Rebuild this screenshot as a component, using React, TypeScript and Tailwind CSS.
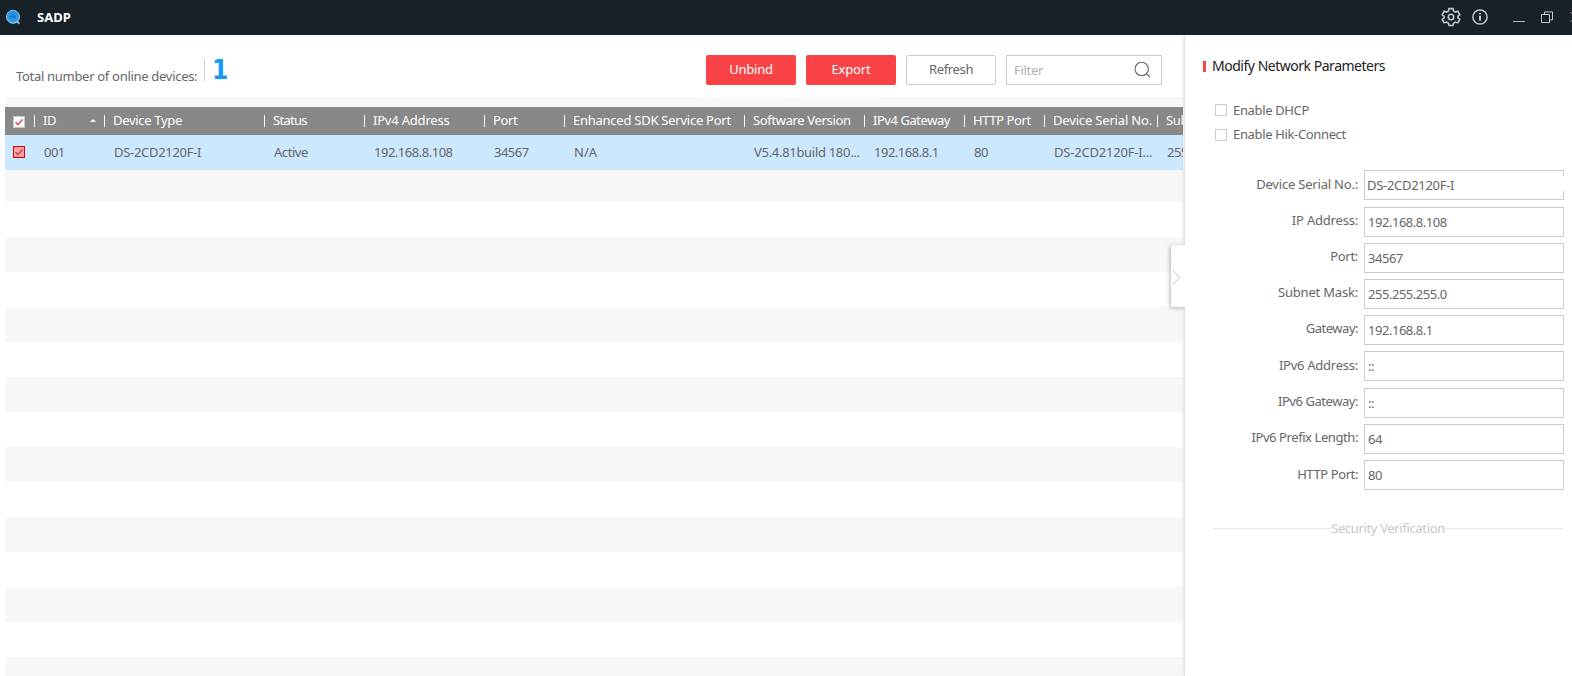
import clsx from "clsx";

type Column = {
  title: string;
  value: string;
  width: string;
  titleClass?: string;
  valueClass?: string;
  sorted?: boolean;
};

const columns: Column[] = [
  { title: "ID", value: "001", width: "w-[70px]", titleClass: "tracking-[-0.5px]", valueClass: "tracking-[-0.5px]", sorted: true },
  { title: "Device Type", value: "DS-2CD2120F-I", width: "w-[160px]", valueClass: "tracking-[-0.3px]" },
  { title: "Status", value: "Active", width: "w-[100px]", titleClass: "tracking-[-0.7px]", valueClass: "tracking-[-0.45px]" },
  { title: "IPv4 Address", value: "192.168.8.108", width: "w-[120px]", titleClass: "tracking-[-0.2px]", valueClass: "tracking-[-0.48px]" },
  { title: "Port", value: "34567", width: "w-[80px]", titleClass: "tracking-[-0.4px]", valueClass: "tracking-[-0.5px]" },
  { title: "Enhanced SDK Service Port", value: "N/A", width: "w-[180px]", titleClass: "tracking-[-0.25px]", valueClass: "tracking-normal" },
  { title: "Software Version", value: "V5.4.81build 180...", width: "w-[120px]", titleClass: "tracking-[-0.35px]" },
  { title: "IPv4 Gateway", value: "192.168.8.1", width: "w-[100px]", titleClass: "tracking-[-0.45px]", valueClass: "tracking-[-0.48px]" },
  { title: "HTTP Port", value: "80", width: "w-[80px]", titleClass: "tracking-[-0.4px]", valueClass: "tracking-[-0.5px]" },
  { title: "Device Serial No.", value: "DS-2CD2120F-I...", width: "w-[113px]", titleClass: "tracking-[-0.17px]", valueClass: "tracking-[-0.2px]" },
  { title: "Subnet Mask", value: "255.255.255.0", width: "w-[120px]", valueClass: "tracking-[-0.5px]" },
];

const fields = [
  { label: "IP Address:", value: "192.168.8.108", gap: "mt-[7px]", labelClass: "pt-[3px] tracking-[-0.2px]" },
  { label: "Port:", value: "34567", gap: "mt-1.5", labelClass: "pt-[3px] tracking-[-0.3px]" },
  { label: "Subnet Mask:", value: "255.255.255.0", gap: "mt-1.5", labelClass: "pt-[3px] tracking-[-0.2px]" },
  { label: "Gateway:", value: "192.168.8.1", gap: "mt-1.5", labelClass: "pt-[3px] tracking-[-0.5px]" },
  { label: "IPv6 Address:", value: "::", gap: "mt-1.5", labelClass: "pt-1 tracking-[-0.25px]" },
  { label: "IPv6 Gateway:", value: "::", gap: "mt-[7px]", labelClass: "pt-[3px] tracking-[-0.45px]" },
  { label: "IPv6 Prefix Length:", value: "64", gap: "mt-1.5", labelClass: "pt-[3px] tracking-[-0.42px]" },
  { label: "HTTP Port:", value: "80", gap: "mt-1.5", labelClass: "pt-1 tracking-[-0.4px]" },
];

function Check({ selected }: { selected?: boolean }) {
  return (
    <svg
      viewBox="0 0 12 12"
      className={clsx(
        "size-3 shrink-0 border",
        selected ? "border-[#d60000] bg-[#ffa3ab]" : "border-[#c8c8c8] bg-white"
      )}
      fill="none"
      stroke="#d9201f"
      strokeWidth="1.3"
    >
      <path d="M1.8 6.2 4.6 9.2 10.4 2.8" />
    </svg>
  );
}

function TitleBar() {
  return (
    <header className="flex h-[35px] shrink-0 items-center bg-[#182028]">
      <svg viewBox="0 0 16 16" className="mb-px ml-[5px] size-4">
        <defs>
          <radialGradient id="lens" cx="50%" cy="45%" r="55%">
            <stop offset="0" stopColor="#1283d8" />
            <stop offset="0.7" stopColor="#2b9bea" />
            <stop offset="1" stopColor="#7cc0f0" />
          </radialGradient>
        </defs>
        <path d="M11.5 11.5 14.3 14.8" stroke="#8fb4cc" strokeWidth="2" />
        <circle cx="8" cy="7.8" r="6.6" fill="url(#lens)" stroke="#8db9da" strokeWidth="0.9" />
        <path d="M4.5 7.7h6.8" stroke="#1274c4" strokeWidth="1.4" strokeDasharray="1.6 0.8" />
      </svg>
      <h1 className="ml-4 text-[13px] leading-[33px] font-bold tracking-normal text-white">SADP</h1>

      <div className="ml-auto flex h-full items-center pb-px text-[#c3c6c8]">
        <svg viewBox="0 0 20 20" className="size-5" fill="none" stroke="currentColor" strokeWidth="1.6">
          <path d="M8 1.6h4l.5 2.4 1.9 1.1 2.4-.8 2 3.4-1.9 1.6v1.6l1.9 1.6-2 3.4-2.4-.8-1.9 1.1-.5 2.3H8l-.5-2.3-1.9-1.1-2.4.8-2-3.4 1.9-1.6V9.3L1.2 7.7l2-3.4 2.4.8L7.5 4z" />
          <circle cx="10" cy="10" r="2.7" />
        </svg>
        <svg viewBox="0 0 16 16" className="mb-px ml-[11px] size-4" fill="none" stroke="currentColor" strokeWidth="1.5">
          <circle cx="8" cy="8" r="7.1" />
          <path d="M8 6.8v5M8 4v1.6" stroke="#fff" />
        </svg>
        <span className="mt-[9px] ml-[25px] h-px w-3 bg-[#b4b7b9]" />
        <svg viewBox="0 0 12 12" className="ml-4 size-3" fill="none" stroke="currentColor">
          <path d="M.5 3.5h8v8h-8zM3.5 3V.9h8v8H9" />
        </svg>
        <svg viewBox="0 0 2 12" className="ml-[17px] h-3 w-0.5" fill="none" stroke="#8b8f92">
          <path d="M0 1 5 6 0 11" />
        </svg>
      </div>
    </header>
  );
}

function Toolbar() {
  return (
    <div className="flex h-[62px] shrink-0 items-start pr-[23px]">
      <span className="mt-[31px] ml-4 w-[188px] leading-5 whitespace-nowrap">Total number of online devices:</span>
      <span className="mt-[24px] h-[22px] w-px bg-[#ccc]" />
      <span className="mt-[20px] ml-[7px] font-['DejaVu_Sans_Condensed','DejaVu_Sans',sans-serif] text-[26px] leading-[30px] font-bold font-stretch-semi-condensed text-[#1799fa]">
        1
      </span>
      <div className="mt-5 ml-auto flex gap-2.5">
        <button className="h-[30px] w-[90px] rounded-xs bg-[#fa4347] pb-px tracking-[-0.2px] text-white">Unbind</button>
        <button className="h-[30px] w-[90px] rounded-xs bg-[#fa4347] pb-px tracking-[-0.2px] text-white">Export</button>
        <button className="h-[30px] w-[90px] rounded-xs border border-[#ccc] pb-px tracking-[-0.35px]">Refresh</button>
        <div className="flex h-[30px] w-[156px] items-center justify-between border border-[#ccc] pr-2.5 pl-[7px]">
          <span className="pt-0.5 text-[#b0b0b0]">Filter</span>
          <svg viewBox="0 0 17 17" className="mb-px size-[17px]" fill="none" stroke="#666" strokeWidth="1.1">
            <circle cx="7.7" cy="8" r="6.7" />
            <path d="M12.5 12.6 16 16" />
          </svg>
        </div>
      </div>
    </div>
  );
}

function DeviceTable() {
  return (
    <div className="ml-[5px] flex w-[1178px] grow flex-col overflow-hidden bg-[#f7f7f7] pt-2.5">
      <div className="flex h-7 shrink-0 items-center bg-[#888] text-white">
        <div className="w-[29px] shrink-0 pt-0.5 pl-2">
          <Check />
        </div>
        {columns.map((col) => (
          <div key={col.title} className={clsx("flex shrink-0 items-center", col.width)}>
            <span className="h-3 w-px bg-white" />
            <span className={clsx("mb-0.5 pl-2 leading-5 whitespace-nowrap", col.titleClass)}>{col.title}</span>
            {col.sorted && (
              <svg viewBox="0 0 6 3" className="mr-2 mb-px ml-auto h-[3px] w-1.5" fill="#fff">
                <path d="M0 3 3 0l3 3z" />
              </svg>
            )}
          </div>
        ))}
      </div>
      <div className="flex h-[35px] shrink-0 items-center bg-[#cce8ff]">
        <div className="w-[29px] shrink-0 pb-px pl-2">
          <Check selected />
        </div>
        {columns.map((col) => (
          <div key={col.title} className={clsx("mb-0.5 shrink-0 pl-2.5 leading-5 whitespace-nowrap", col.width, col.valueClass)}>
            {col.value}
          </div>
        ))}
      </div>
      {/* empty rows, the first one is slightly shorter */}
      <div className="mt-8">
        {Array.from({ length: 14 }, (_, i) => (
          <div key={i} className="h-[35px] odd:bg-white even:bg-[#f7f7f7]" />
        ))}
      </div>
    </div>
  );
}

function NetworkPanel() {
  return (
    <aside className="relative w-[387px] shrink-0 bg-white pt-5 shadow-[-1px_0_3px_rgba(0,0,0,0.2)]">
      {/* collapse handle */}
      <button className="absolute top-[210px] -left-3.5 flex h-[62px] w-3.5 items-center rounded-l-xs bg-white shadow-[-1px_1px_4px_rgba(0,0,0,0.3)]">
        <svg viewBox="0 0 9 15" className="mt-0.5 ml-px h-[15px] w-[9px]" fill="none" stroke="#c4c4c4">
          <path d="M.5.5 8 7.5.5 14.5" />
        </svg>
      </button>
      <div className="absolute inset-0 bg-white" />

      <div className="relative">
        <h2 className="flex items-center pl-[18px] text-[14px] leading-[22px] tracking-[-0.48px] text-[#222]">
          <i className="h-[11px] w-[3px] bg-[#fa4347]" />
          <span className="pl-1.5">Modify Network Parameters</span>
        </h2>
        <label className="mt-[23px] flex h-5 items-center gap-1.5 pl-[30px]">
          <i className="size-3 border border-[#ccc]" />
          <span className="pt-0.5 tracking-[-0.35px]">Enable DHCP</span>
        </label>
        <label className="mt-[5px] flex h-5 items-center gap-1.5 pl-[30px] tracking-[-0.35px]">
          <i className="size-3 border border-[#ccc]" />
          Enable Hik-Connect
        </label>

        <div className="mt-[25px] flex h-[30px]">
          <span className="w-[173px] pt-1 text-right leading-5 tracking-[-0.2px]">Device Serial No.:</span>
          <div className="ml-1.5 flex w-[200px] justify-between border border-r-0 border-[#ccc] pl-0.5">
            <span className="pt-1 leading-5 tracking-[-0.3px]">DS-2CD2120F-I</span>
            {/* right edge is open beside the read-only value */}
            <span className="flex w-px flex-col justify-between">
              <i className="h-[5px] bg-[#ccc]" />
              <i className="h-2 bg-[#ccc]" />
            </span>
          </div>
        </div>
        {fields.map((f) => (
          <div key={f.label} className={clsx("flex h-[30px]", f.gap)}>
            <span className={clsx("w-[173px] text-right leading-5", f.labelClass)}>{f.label}</span>
            <div className="ml-1.5 w-[200px] border border-[#ccc] pt-1 pl-[3px] leading-5 tracking-[-0.47px]">{f.value}</div>
          </div>
        ))}

        <div className="mt-7 mr-[9px] ml-7 flex h-5 items-center text-[#c8c8c8]">
          <i className="h-px grow bg-[#e8e8e8]" />
          <span className="pt-0.5 tracking-[-0.35px]">Security Verification</span>
          <i className="h-px grow bg-[#e8e8e8]" />
        </div>
      </div>
    </aside>
  );
}

export default function App() {
  return (
    <div className="flex h-[676px] w-[1572px] flex-col overflow-hidden bg-white font-['Noto_Sans',sans-serif] text-[13px] tracking-[-0.3px] text-[#666]">
      <TitleBar />
      <div className="flex min-h-0 grow">
        <main className="flex min-w-0 grow flex-col overflow-hidden">
          <Toolbar />
          <DeviceTable />
        </main>
        <NetworkPanel />
      </div>
    </div>
  );
}
